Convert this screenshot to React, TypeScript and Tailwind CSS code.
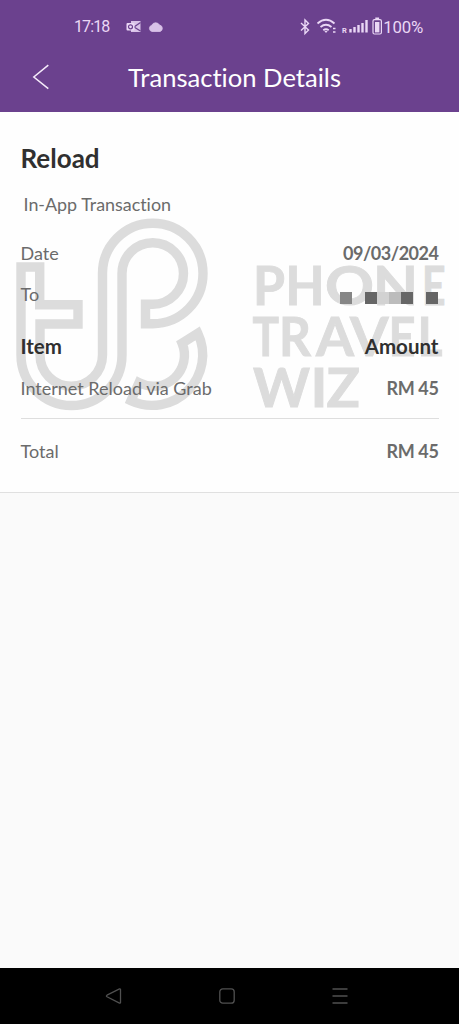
import React from 'react';

interface GlyphProps {
  char: string;
  x: number;
  y: number;
  width: number;
}

const watermarkGlyphs: GlyphProps[] = [
  { char: 'P', x: 253, y: 304.5, width: 32 },
  { char: 'H', x: 285.5, y: 304.5, width: 39 },
  { char: 'O', x: 325, y: 304.5, width: 49 },
  { char: 'N', x: 373, y: 304.5, width: 45 },
  { char: 'E', x: 422, y: 304.5, width: 23.5 },
  { char: 'T', x: 252.5, y: 356, width: 26.5 },
  { char: 'R', x: 279, y: 356, width: 32 },
  { char: 'A', x: 316, y: 356, width: 38 },
  { char: 'V', x: 350, y: 356, width: 38.5 },
  { char: 'E', x: 388.5, y: 356, width: 27 },
  { char: 'L', x: 417.5, y: 356, width: 25 },
  { char: 'W', x: 253, y: 407.3, width: 57 },
  { char: 'I', x: 310.5, y: 407.3, width: 17 },
  { char: 'Z', x: 326.5, y: 407.3, width: 33.5 },
];

const Watermark = () => (
  <svg
    className="absolute left-0 -top-28 pointer-events-none"
    width="459"
    height="492"
    viewBox="0 0 459 492"
  >
    <g fill="none" stroke="#dcdcdc" strokeWidth="9.4">
      <path d="M21 267H39.7V304.7H78V324H40V355A31.25 31.25 0 0 0 102.5 355V273.4A50.25 50.25 0 1 1 152.75 323.7H145.5V304.2H152.75A30.75 30.75 0 1 0 122 273.4V355A50.5 50.5 0 0 1 21 355Z" />
      <path d="M182 343.2L197.8 333.2A50.5 50.5 0 0 1 131 400.7L139 382.7A31 31 0 0 0 182 343.2Z" />
    </g>
    {watermarkGlyphs.map((glyph, i) => (
      <text
        key={i}
        x={glyph.x}
        y={glyph.y}
        textLength={glyph.width}
        lengthAdjust="spacingAndGlyphs"
        className="fill-[#dcdcdc] stroke-[#dcdcdc] stroke-[0.9px] font-['Lato'] text-[53.5px] font-bold"
      >
        {glyph.char}
      </text>
    ))}
  </svg>
);

const StatusBar = () => (
  <div className="flex h-[53px] items-center pl-[74px] pr-[36px] text-[#ead7f5] font-['Roboto',sans-serif]">
    <span className="w-[52px] text-[16px] leading-none tracking-[-0.9px]">17:18</span>
    <svg width="38" height="14" viewBox="0 0 38 14">
      <path d="M5 1H14.5V12H5Z" fill="#d9c2e8" />
      <path d="M8 7L14.5 2.5M8 7L14.5 11" stroke="#6b418e" strokeWidth="1.3" />
      <rect x="0.5" y="3" width="8" height="7.5" rx="1" fill="#ead7f5" />
      <circle cx="4.5" cy="6.8" r="2" fill="none" stroke="#6b418e" strokeWidth="1.2" />
      <path d="M26 11.5a3.2 3.2 0 0 1-.3-6.2A4.4 4.4 0 0 1 33.5 5a3.4 3.4 0 0 1 .7 6.5Z" fill="#d9c2e8" stroke="#d9c2e8" strokeWidth="0.8" />
    </svg>
    <div className="ml-auto flex items-center">
      <svg width="83" height="20" viewBox="300 17 83 20" fill="none" stroke="#ead7f5">
        <path d="M301 23L308.5 30L305 33.5V20L308.5 23.5L301 30.5" strokeWidth="1.4" />
        <g strokeWidth="1.8">
          <path d="M317.5 23.5Q326 16 334.5 23.5" />
          <path d="M320.5 27Q326 22.5 331.5 27" />
          <path d="M323.3 30.2Q326 28 328.7 30.2" />
        </g>
        <path d="M324.2 30.8L326 33L327.8 30.8Z" fill="#ead7f5" stroke="none" />
        <path d="M333 28.5h2.5M333 32h2.5" strokeWidth="1.5" />
        <text x="342" y="32.5" className="fill-[#ead7f5] stroke-none font-['Roboto'] text-[7.5px] font-bold">R</text>
        <path d="M350.5 32.5V29M354.5 32.5V27M358.5 32.5V25M362.5 32.5V23M366.5 32.5V20" strokeWidth="2.4" />
        <rect x="373" y="19.6" width="8.4" height="14.4" rx="1.5" strokeWidth="1.2" />
        <path d="M375 22h4.4v10.4H375Z" fill="#ead7f5" stroke="none" />
        <path d="M375.3 18.3h3.8" strokeWidth="1.6" />
      </svg>
      <span className="mt-px text-[16.8px] leading-none tracking-[-0.2px]">100%</span>
    </div>
  </div>
);

const Header = () => (
  <header className="h-28 bg-[#6b418e]">
    <StatusBar />
    <div className="relative flex h-[50px] items-center justify-center pl-[10px]">
      <svg className="absolute left-[32px] top-[11px]" width="18" height="26" viewBox="0 0 18 26">
        <path d="M16.3 1.2L1.8 13L16.3 24.7" fill="none" stroke="#f5ebfa" strokeWidth="1.5" />
      </svg>
      <h1 className="text-[25.6px] leading-none text-white">Transaction Details</h1>
    </div>
  </header>
);

interface RowProps {
  label: string;
  value?: React.ReactNode;
  heading?: boolean;
  className?: string;
  valueClassName?: string;
}

const Row = ({
  label,
  value,
  heading = false,
  className = '',
  valueClassName = '',
}: RowProps) => (
  <div
    className={`flex items-center justify-between ${
      heading ? 'text-[20.5px] font-bold text-[#303030]' : 'text-[18px] text-[#6b6b6b]'
    } ${className}`}
  >
    <span>{label}</span>
    <span className={`font-bold ${valueClassName}`}>{value}</span>
  </div>
);

const MaskedNumber = () => (
  <span className="mr-px mt-2 flex h-3">
    <span className="w-3 bg-[#868686]" />
    <span className="w-[13px]" />
    <span className="w-3 bg-[#666666]" />
    <span className="w-3 bg-[#d2d2d2]" />
    <span className="w-3 bg-[#bcbcbc]" />
    <span className="w-3 bg-[#666666]" />
    <span className="w-[13px]" />
    <span className="w-3 bg-[#666666]" />
  </span>
);

const NavigationBar = () => (
  <nav className="flex h-14 items-center justify-between bg-black pl-[105px] pr-[111px]">
    <svg width="17" height="16" viewBox="0 0 17 16" fill="none" stroke="#505050" strokeWidth="1.3">
      <path d="M2 7.2L14.5 .9Q15.5 .6 15.5 1.6V14.4Q15.5 15.4 14.5 15.1L2 8.8Q.8 8 2 7.2Z" />
    </svg>
    <svg width="16" height="16" viewBox="0 0 16 16" fill="none" stroke="#505050" strokeWidth="1.3">
      <rect x=".8" y=".8" width="14.4" height="14.4" rx="3" />
    </svg>
    <svg width="16" height="16" viewBox="0 0 16 16" stroke="#505050" strokeWidth="1.4">
      <path d="M.5 1h15M.5 8h15M.5 15h15" />
    </svg>
  </nav>
);

const App = () => (
  <div className="flex h-[1024px] w-[459px] flex-col overflow-hidden bg-[#fafafa] font-['Lato',sans-serif] [font-variant-ligatures:none]">
    <Header />
    <main className="relative h-[381px] border-b border-[#e0e0e0] bg-[#fefefe]">
      <Watermark />
      <div className="relative px-[20.5px] pt-[29px]">
        <h2 className="h-[34px] text-[26px] font-bold leading-[34px] text-[#303030]">Reload</h2>
        <p className="ml-[3px] mt-[15px] h-[28px] text-[17.9px] leading-[28px] text-[#6b6b6b]">
          In-App Transaction
        </p>
        <Row label="Date" value="09/03/2024" valueClassName="text-[18px] tracking-[-0.48px]" className="mt-[21px] h-[28px]" />
        <Row label="To" value={<MaskedNumber />} className="mt-[13px] h-[28px]" />
        <Row label="Item" value="Amount" heading className="mt-[24px] h-[28px]" />
        <Row label="Internet Reload via Grab" value="RM 45" valueClassName="text-[18px] tracking-[-0.35px]" className="mt-[14px] h-[28px]" />
        <div className="mt-[16px] border-t border-[#dedede]" />
        <Row label="Total" value="RM 45" valueClassName="text-[18px] tracking-[-0.35px]" className="mt-[18px] h-[28px]" />
      </div>
    </main>
    <div className="flex-1" />
    <NavigationBar />
  </div>
);

export default App;
